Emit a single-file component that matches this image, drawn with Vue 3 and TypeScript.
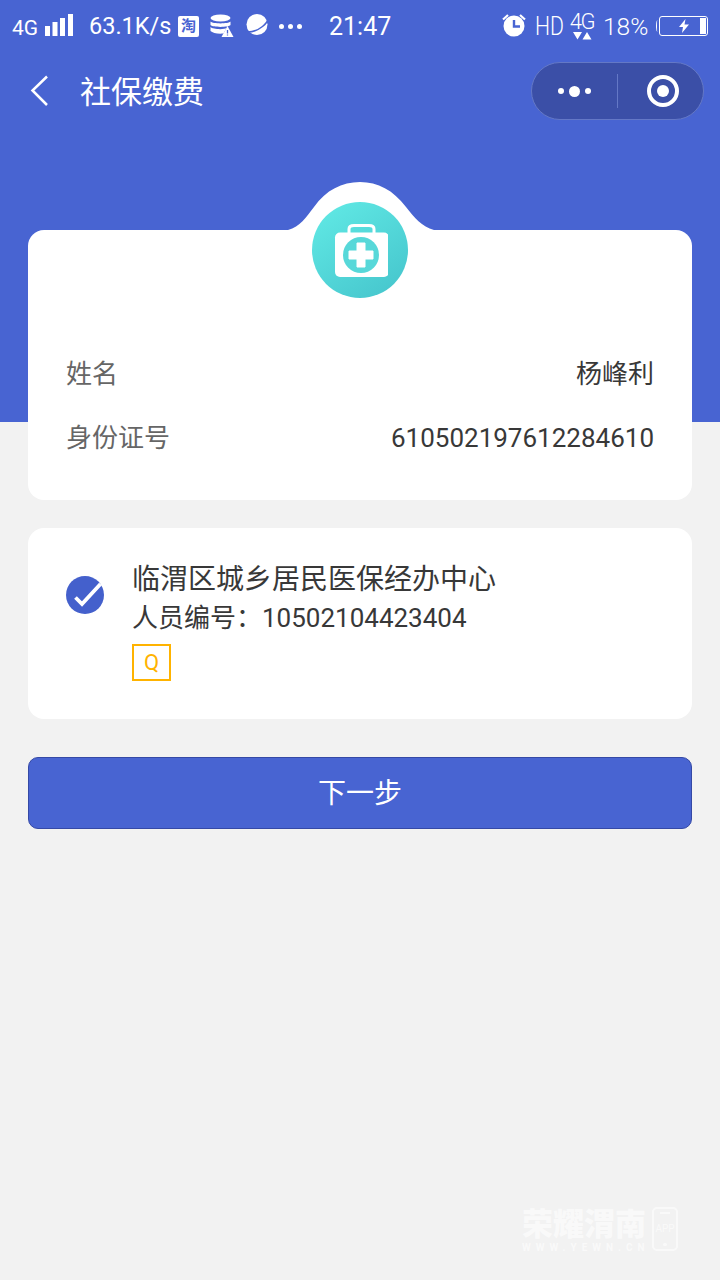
<script setup lang="ts">
const infoRows: { label: string; value: string }[] = [
  { label: '姓名', value: '杨峰利' },
  { label: '身份证号', value: '610502197612284610' },
]
</script>

<template>
  <div class="page">
    <header class="hero">
      <div class="status">
        <span class="net">4G</span>
        <svg class="signal" width="30" height="24" viewBox="0 0 30 24"><g fill="#fff"><rect x="0" y="13" width="5" height="10"/><rect x="7.500" y="9" width="5" height="14"/><rect x="15" y="5" width="5" height="18"/><rect x="23" y="1" width="5" height="22"/></g></svg>
        <span class="speed">63.1K/s</span>
        <span class="tao">淘</span>
        <svg class="db" width="24" height="24" viewBox="0 0 24 24"><g fill="#fff"><ellipse cx="10.500" cy="4" rx="10" ry="3.500"/><path d="M.5 7.500c2 2.500 18 2.500 20 0v3.500c-2 2.500-18 2.500-20 0zM.5 13c2 2.500 14 2.800 16 1l-3 5.500c-6 .5-11-.5-13-2.500z"/><path d="M17.500 12l6 11h-12z"/></g><path d="M17.500 16v3.500M17.500 20.500v1" stroke="#4864d2" stroke-width="1.300"/></svg>
        <svg class="planet" width="24" height="24" viewBox="0 0 24 24"><circle cx="12" cy="11.500" r="10.500" fill="#fff"/><path d="M.5 19c5 .5 12-1.500 17-5.500 3-2.500 5-5 5.500-7" fill="none" stroke="#4864d2" stroke-width="1.500"/></svg>
        <span class="dots"><i></i><i></i><i></i></span>
        <span class="clock">21:47</span>
        <span class="fill"></span>
        <svg class="alarm" width="24" height="24" viewBox="0 0 24 24"><path d="M1 6.500 6 2M23 6.500 18 2" stroke="#fff" stroke-width="2.200" fill="none"/><circle cx="12" cy="13" r="10.500" fill="#fff"/><path d="M12 7v6.500h6" stroke="#4864d2" stroke-width="2.400" fill="none"/></svg>
        <span class="hd">HD</span>
        <span class="fourg">4G<svg width="20" height="8" viewBox="0 0 20 8"><path d="M1 0h9L5.500 7.500zM15 0l4.500 7.500h-9z" fill="#fff"/></svg></span>
        <span class="pct">18%</span>
        <span class="batt"><svg width="12" height="14" viewBox="0 0 12 14"><path d="M7.500 0 1 8h4l-1 6 7-8.500H6.500z" fill="#fff"/></svg><i></i></span>
      </div>
      <nav class="nav">
        <svg class="back" width="20" height="32" viewBox="0 0 20 32"><path d="M17 1.500 2.500 15.500 17 30" fill="none" stroke="#fff" stroke-width="2.500"/></svg>
        <h1 class="title">社保缴费</h1>
        <div class="capsule">
          <span class="more"><i></i><b></b><i></i></span>
          <span class="sep"></span>
          <span class="target"><i></i></span>
        </div>
      </nav>
    </header>

    <main class="content">
      <section class="card info">
        <svg class="hump" width="146" height="49" viewBox="0 0 146 49"><path d="M0 49C12 46 18 36 26 26 38 9 54 1 72 1c18 0 33 8 46 25 8 10 16 20 28 23z" fill="#fff"/></svg>
        <div class="badge">
          <svg width="56" height="56" viewBox="0 0 56 56">
            <path d="M17 12V7C17 4 19 3.500 22 3.500h15c3 0 5 .5 5 3.500v5" fill="none" stroke="#fff" stroke-width="3"/>
            <rect x="3" y="10.500" width="54" height="44.500" rx="5" fill="#fff"/>
            <circle cx="29" cy="33" r="18" fill="#57d8d9"/>
            <path d="M25 21h8v8h8v8h-8v8h-8v-8h-8v-8h8z" fill="#fff" stroke="#fff" stroke-width="1" stroke-linejoin="round"/>
          </svg>
        </div>
        <dl class="rows">
          <div v-for="row in infoRows" :key="row.label" class="row">
            <dt>{{ row.label }}</dt>
            <dd>{{ row.value }}</dd>
          </div>
        </dl>
      </section>

      <section class="card person">
        <svg class="check" width="38" height="38" viewBox="0 0 38 38"><circle cx="19" cy="19" r="19" fill="#4460cc"/><path d="M9.500 21.500l6.500 6.500L34.500 8" fill="none" stroke="#fff" stroke-width="3.800"/></svg>
        <div class="detail">
          <p class="org">临渭区城乡居民医保经办中心</p>
          <p class="num">人员编号：10502104423404</p>
          <span class="tag">Q</span>
        </div>
      </section>

      <button class="next" type="button">下一步</button>
    </main>

    <footer class="mark">
      <div class="mark-text">
        <strong>荣耀渭南</strong>
        <span>WWW.YEWN.CN</span>
      </div>
      <div class="phone">
        <i class="speaker"></i>
        <em>APP</em>
        <i class="home"></i>
      </div>
    </footer>
  </div>
</template>

<style scoped>
.page {
  position: relative;
  height: 1280px;
  overflow: hidden;
  background: #f2f2f2;
  font-family: Roboto, "Noto Sans CJK SC", sans-serif;
}
.hero {
  height: 422px;
  background: #4864d2;
  color: #fff;
}
.status {
  display: flex;
  align-items: center;
  height: 50px;
  padding: 2px 12px 0 12px;
  box-sizing: border-box;
}
.net { font-size: 21px; width: 33px; margin-top: 4px; }
.signal { margin-right: 14px; margin-top: -2px; }
.speed { font-size: 23.500px; width: 89px; }
.tao {
  width: 21px; height: 21px; border-radius: 2px;
  background: #fff; color: #4864d2;
  font-size: 15px; font-weight: 700; line-height: 21px; text-align: center;
  margin-right: 11px;
}
.db { margin-right: 11px; }
.planet { margin-right: 10px; margin-top: -2px; }
.dots { display: flex; gap: 4px; width: 50px; }
.dots i { width: 5px; height: 5px; border-radius: 50%; background: #fff; }
.clock { font-size: 25px; width: 62px; }
.fill { flex: 1; }
.alarm { margin-right: 9px; margin-top: -2px; }
.hd { display: inline-block; width: 34px; font-size: 25px; font-weight: 300; transform: scaleX(.85); transform-origin: left center; }
.fourg {
  display: flex; flex-direction: column; align-items: center;
  width: 26px;
  font-size: 22px; line-height: 19px; font-weight: 300; letter-spacing: -1.500px;
  margin-right: 8px; margin-top: 0;
}
.fourg svg { display: block; margin-top: 1px; }
.pct { font-size: 24.500px; font-weight: 300; margin-right: 10px; width: 46px; white-space: nowrap; }
.batt {
  position: relative;
  display: flex; align-items: center; justify-content: flex-end; gap: 10px;
  width: 49px; height: 20px; box-sizing: border-box;
  border: 1px solid #fff; border-radius: 3px; padding: 1px 1px 1px 0;
}
.batt::before {
  content: ""; position: absolute; left: -4px; top: 3px;
  width: 2px; height: 12px; border-left: 1px solid #fff; border-radius: 50%;
}
.batt i { width: 6px; height: 16px; background: #fff; }

.nav {
  display: flex;
  align-items: center;
  height: 58px;
  margin-top: 12px;
  padding: 0 16px 0 30px;
}
.back { margin-right: 30px; }
.title { flex: 1; margin: 2px 0 0; font-size: 31px; font-weight: 400; line-height: 1; }
.capsule {
  display: flex; align-items: center;
  width: 173px; height: 58px; box-sizing: border-box;
  background: #3b4fa7; border: 1px solid #6478c6; border-radius: 29px;
}
.more { display: flex; align-items: center; justify-content: center; gap: 5px; width: 85px; }
.more i { width: 6px; height: 6px; border-radius: 50%; background: #fff; }
.more b { width: 11px; height: 11px; border-radius: 50%; background: #fff; }
.sep { width: 1px; height: 34px; background: #6478c6; }
.target {
  display: flex; align-items: center; justify-content: center;
  width: 32px; height: 32px; margin-left: 29px; box-sizing: border-box;
  border: 4px solid #fff; border-radius: 50%;
}
.target i { width: 12px; height: 12px; border-radius: 50%; background: #fff; }

.content {
  display: flex;
  flex-direction: column;
  margin-top: -192px;
  padding: 0 28px;
}
.card {
  position: relative;
  background: #fff;
  border-radius: 16px;
}
.info { height: 270px; box-sizing: border-box; padding: 124px 38px 0; }
.hump { position: absolute; left: 260px; top: -49px; }
.badge {
  position: absolute; left: 284px; top: -28px;
  display: flex; align-items: center; justify-content: center;
  width: 96px; height: 96px; border-radius: 50%;
  background: linear-gradient(145deg, #62ebe6, #44c3cb);
}
.rows { margin: 0; display: flex; flex-direction: column; gap: 24px; }
.row {
  display: flex; justify-content: space-between; align-items: center;
  height: 40px; font-size: 26px; line-height: 40px;
}
.row dt { color: #666; }
.row dd { margin: 0; color: #383838; }

.person {
  display: flex; align-items: flex-start;
  height: 191px; margin-top: 28px; box-sizing: border-box;
  padding: 34px 38px 0;
}
.check { margin-top: 14px; margin-right: 28px; overflow: visible; }
.detail { display: flex; flex-direction: column; align-items: flex-start; color: #383838; }
.org { margin: 0; font-size: 28px; line-height: 36px; }
.num { margin: 1px 0 -1px; font-size: 26px; line-height: 38px; }
.tag {
  margin-top: 8px;
  width: 39px; height: 37px; box-sizing: border-box;
  border: 2px solid #ffb300; color: #ffb300;
  font-size: 22px; line-height: 33px; text-align: center;
}

.next {
  height: 72px; margin-top: 38px; padding: 0 0 4px;
  background: #4864d2; color: #fff;
  border: 1px solid #3549a6; border-radius: 10px;
  font-family: inherit; font-size: 28px;
}

.mark {
  position: absolute; left: 522px; top: 1207px;
  display: flex; gap: 5px; color: #fff; opacity: .6;
}
.mark-text { display: flex; flex-direction: column; width: 125px; }
.mark-text strong { font-size: 31px; line-height: 35px; font-weight: 900; white-space: nowrap; }
.mark-text span { font-size: 10px; line-height: 11px; font-weight: 700; letter-spacing: 5px; white-space: nowrap; }
.phone {
  width: 26px; height: 44px; box-sizing: border-box;
  border: 2px solid #fff; border-radius: 5px;
  display: flex; flex-direction: column; align-items: center; justify-content: space-between;
  padding: 3px 0;
}
.phone .speaker { width: 10px; height: 2px; background: #fff; }
.phone .home { width: 4px; height: 3px; background: #fff; border-radius: 2px; }
.phone em { font-style: normal; font-size: 10px; line-height: 12px; }
</style>
